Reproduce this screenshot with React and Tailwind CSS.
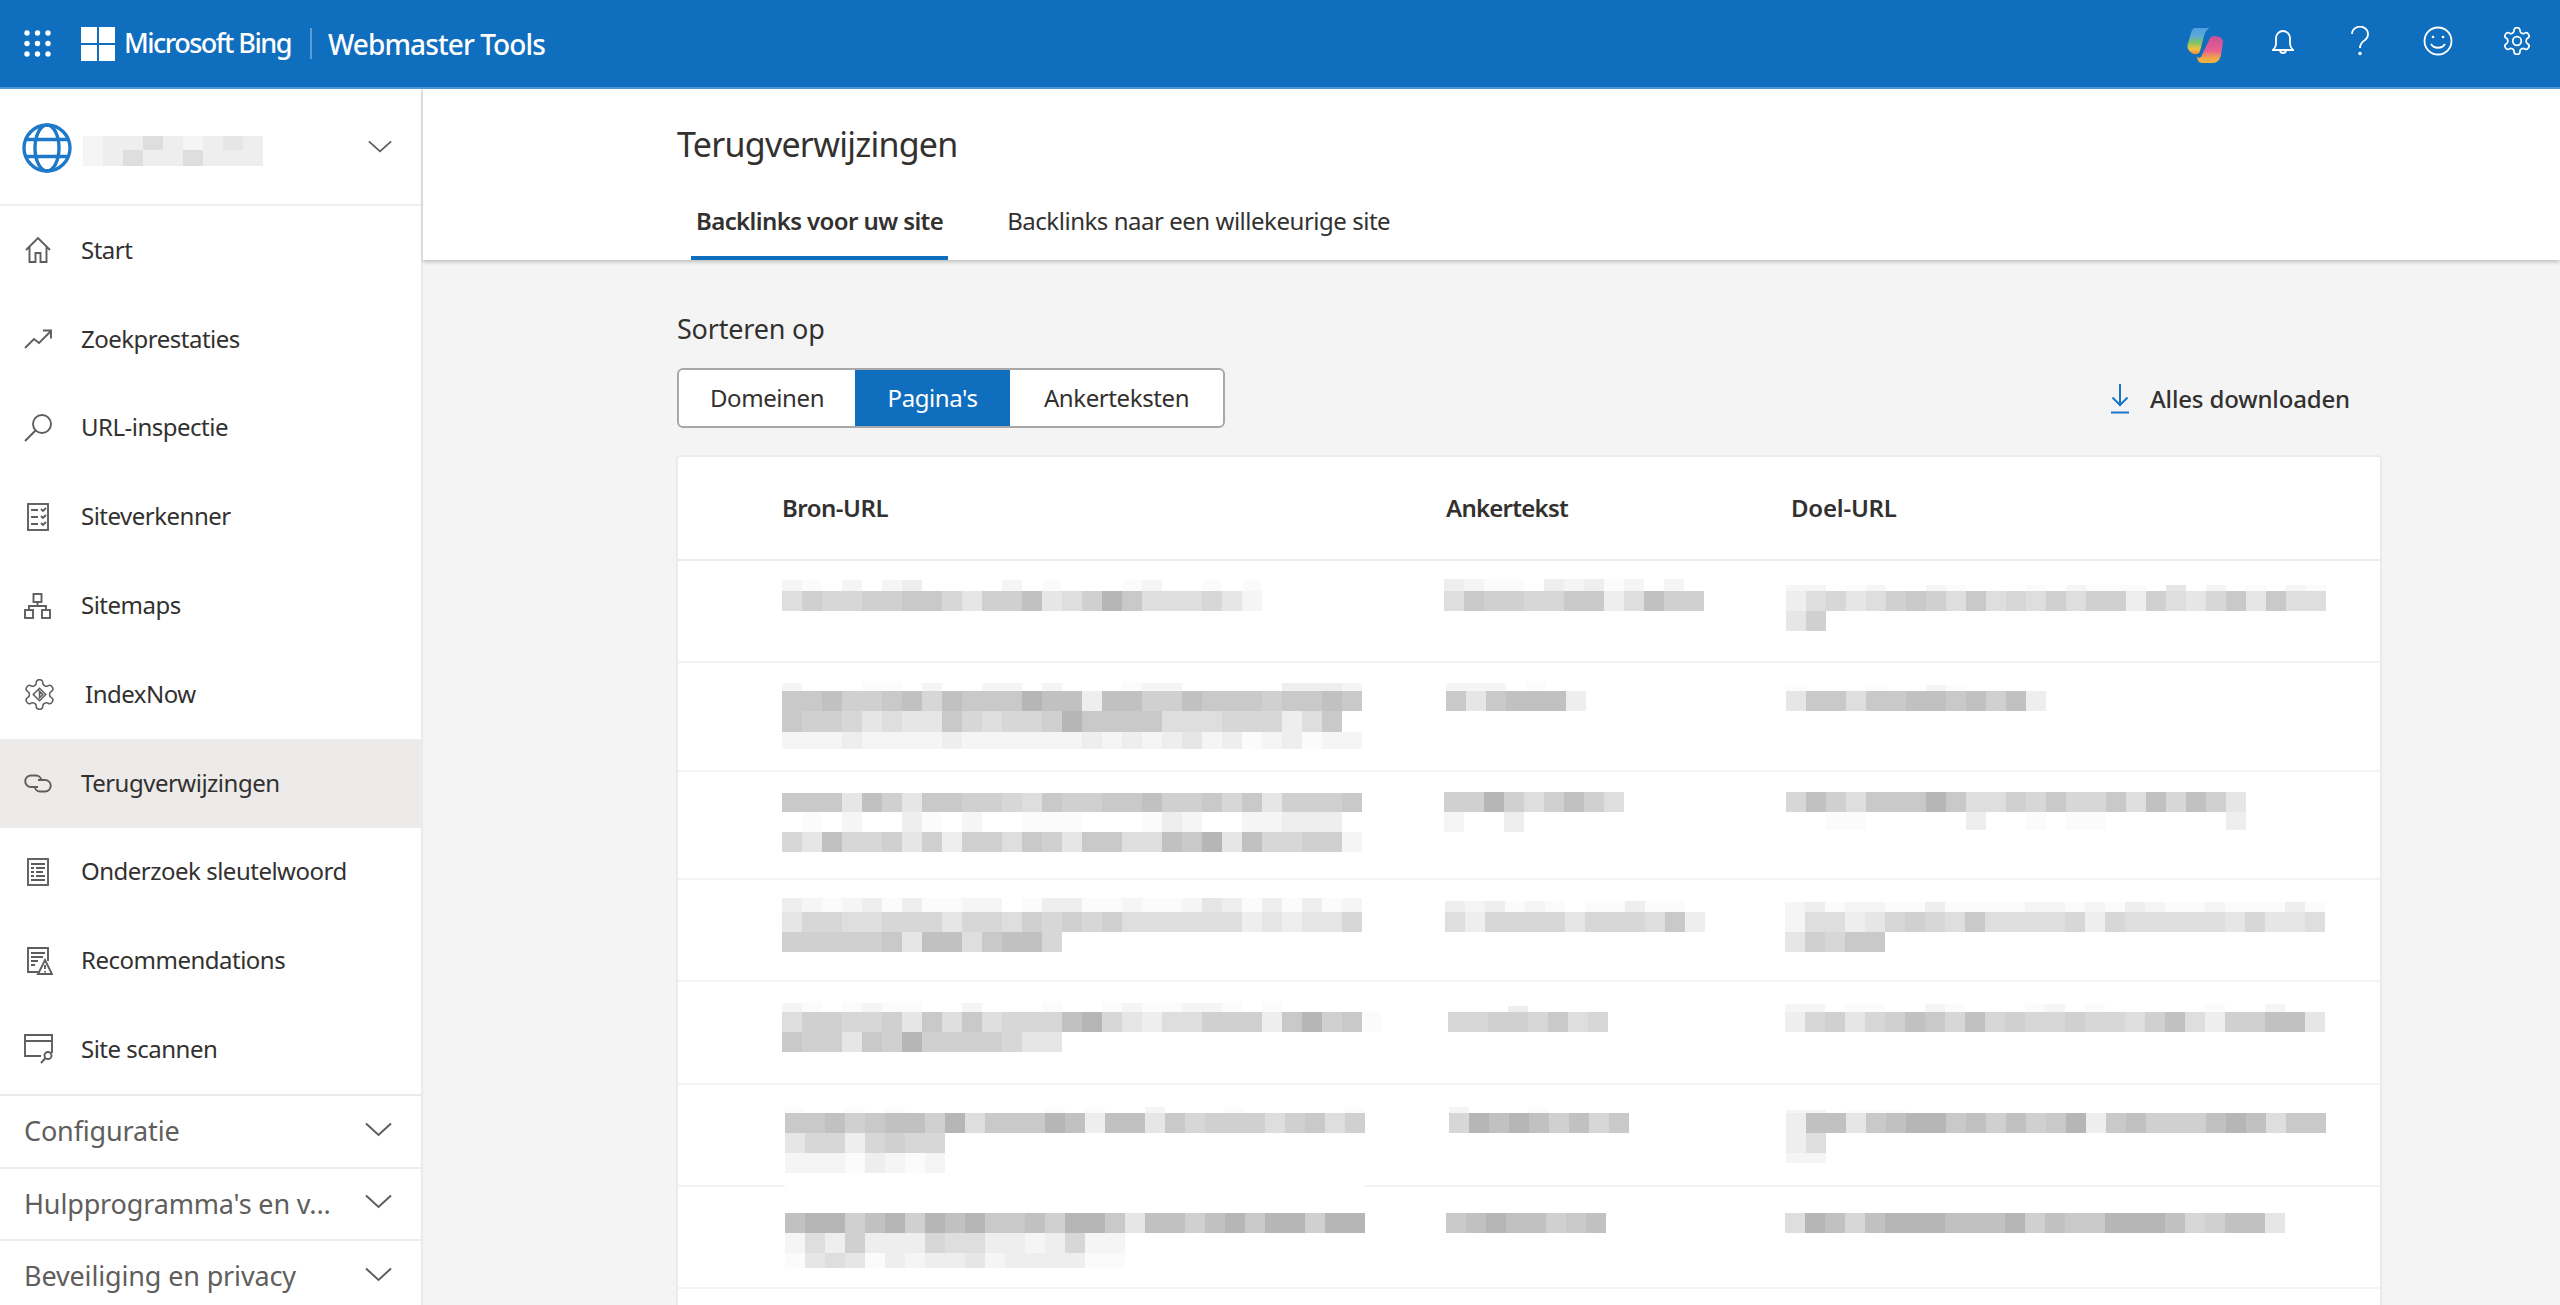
import React from "react";

const GRAY = { 0: "transparent", 1: "#fbfbfb", 2: "#f5f5f5", 3: "#eeeeee", 4: "#e6e6e6", 5: "#dedede", 6: "#d7d7d7", 7: "#d0d0d0", 8: "#c9c9c9", 9: "#c1c1c1", a: "#b6b6b6", w: "#ffffff" };

function Mosaic({ rows, left = 0, top = 0 }) {
  return (
    <div className="relative z-10 flex w-fit flex-col" style={{ marginLeft: left, marginTop: top }}>
      {rows.map(([h, cells], i) => (
        <div key={i} className="flex" style={{ height: h }}>
          {cells.split("").map((c, j) => (
            <div key={j} className="w-5 flex-none" style={{ background: GRAY[c] }} />
          ))}
        </div>
      ))}
    </div>
  );
}

const COL2 = 1444, COL3 = 1784, COL1 = 678;
const W29 = "wwwwwwwwwwwwwwwwwwwwwwwwwwwww";
const ROWS = [
  { h: 102, a: [782, 580, [[11, "210202300002010001200101"], [20, "5766778864779457a8555642"]]], b: [1444, 579, [[12, "3211032312020"], [20, "5877668835977"]]], c: [1786, 585, [[6, "220120021000102111040201021"], [20, "356457875856575773754684855"], [20, "47"]]] },
  { h: 109, a: [782, 683, [[8, "20001102002202000122000003332"], [20, "889778969888a9939977988878898"], [21, "87764544865667a8888555666358"], [17, "22232222322222232323423123122"]]], b: [1446, 683, [[8, "2220100"], [20, "8489993"]]], c: [1786, 685, [[6, "1000100210000"], [20, "4885889989793"]]] },
  { h: 108, a: [782, 793, [[19, "88849748877658778897786847778"], [20, "0102003102001110001320022333"], [20, "649667473775874885598a4966772"]]], b: [1444, 792, [[20, "77a757975"], [20, "2003"]]], c: [1786, 792, [[20, "6975888a855768668596974"], [18, "00110000030010110000003"]]] },
  { h: 102, a: [782, 898, [[14, "32123131122013311211243131312"], [20, "46655666466576767555555343446"], [20, "77777849958996"]]], b: [1445, 901, [[11, "3231210113110"], [20, "5366664666583"]]], c: [1785, 902, [[10, "231221131111221213211211131"], [20, "255346765855556365555546445"], [20, "47688"]]] },
  { h: 103, a: [782, 1003, [[9, "21012110020001001211221010000"], [20, "577667485856669a6435577738a781"], [20, "877487a7777644"]]], b: [1448, 1006, [[6, "0003"], [20, "66776856"]]], c: [1785, 1004, [[8, "220110021000120100000100200"], [20, "367467986967667665795377994"]]] },
  { h: 102, a: [785, 1107, [[6, "10010100000001010020001000001"], [20, "88978997a5888a939948677757857"], [20, "46636766"], [20, "22213212"], [27, W29]]], b: [1449, 1107, [[6, "200010"], [20, "6a9a97968"]]], c: [1786, 1110, [[3, "220111"], [20, "399489aa897978a3897779a9588"], [20, "35"], [10, "22"]]] },
  { h: 102, a: [785, 1213, [[20, "9aa79a7a9a8897aa849979a8aa7aa"], [20, "25373336553323622"], [15, "14541323342333311"]]], b: [1446, 1213, [[20, "89a99789"]]], c: [1785, 1213, [[20, "5a969aaa999a7988aaa967994"]]] },
  { h: 102 },
];

const S = { fill: "none", stroke: "#605e5c", strokeWidth: 1.9 };
const GEAR = "M12.22 2h-.44a2 2 0 0 0-2 2v.18a2 2 0 0 1-1 1.73l-.43.25a2 2 0 0 1-2 0l-.15-.08a2 2 0 0 0-2.73.73l-.22.38a2 2 0 0 0 .73 2.73l.15.1a2 2 0 0 1 1 1.72v.51a2 2 0 0 1-1 1.74l-.15.09a2 2 0 0 0-.73 2.73l.22.38a2 2 0 0 0 2.73.73l.15-.08a2 2 0 0 1 2 0l.43.25a2 2 0 0 1 1 1.73V20a2 2 0 0 0 2 2h.44a2 2 0 0 0 2-2v-.18a2 2 0 0 1 1-1.73l.43-.25a2 2 0 0 1 2 0l.15.08a2 2 0 0 0 2.73-.73l.22-.39a2 2 0 0 0-.73-2.73l-.15-.08a2 2 0 0 1-1-1.74v-.5a2 2 0 0 1 1-1.74l.15-.09a2 2 0 0 0 .73-2.73l-.22-.38a2 2 0 0 0-2.73-.73l-.15.08a2 2 0 0 1-2 0l-.43-.25a2 2 0 0 1-1-1.73V4a2 2 0 0 0-2-2z";

const Icons = {
  home: <svg width="28" height="28" viewBox="0 0 28 28" {...S}><path d="M2 14 14 2 26 14M5.500 11v15h6V17h5v9h6V11" /></svg>,
  trend: <svg width="28" height="20" viewBox="0 0 28 20" {...S}><path d="M1 19 10 10l5 4L27 2M19 1.500h8v8" /></svg>,
  search: <svg width="28" height="28" viewBox="0 0 28 28" {...S}><circle cx="18" cy="10" r="9" /><path d="M11.500 16.500 1 27" /></svg>,
  check: <svg width="22" height="28" viewBox="0 0 22 28" {...S}><rect x="1" y="1" width="20" height="26" /><path d="M4 7h7M4 14h7M4 21h7M14 6l2 2 3-3M14 13l2 2 3-3M14 20l2 2 3-3" /></svg>,
  sitemap: <svg width="27" height="26" viewBox="0 0 27 26" {...S}><rect x="9.500" y="1" width="8" height="8" /><rect x="1" y="17" width="8" height="8" /><rect x="18" y="17" width="8" height="8" /><path d="M13.500 9v4M5 17v-4h17v4" /></svg>,
  gear: <svg width="31" height="31" viewBox="1.500 1.500 21 21" fill="none" stroke="#605e5c" strokeWidth="1.05"><path d={GEAR} /><path d="M12 7.800 16.200 12 12 16.200 7.800 12zM12 9.800v4.400L14.200 12z" /></svg>,
  link: <svg width="28" height="19" viewBox="0 0 28 19" {...S}><path d="M14 13H7A5.700 5.700 0 0 1 7 1.500h5A5.800 5.800 0 0 1 17.500 7" /><path d="M14 6h7a5.700 5.700 0 0 1 0 11.500h-5A5.800 5.800 0 0 1 10.500 12" /></svg>,
  doc: <svg width="22" height="28" viewBox="0 0 22 28" {...S}><rect x="1" y="1" width="20" height="26" /><path d="M4 6h14M4 10h3M9 10h9M4 14h3M9 14h7M4 18h3M9 18h9M4 22h14" /></svg>,
  rec: <svg width="26" height="28" viewBox="0 0 26 28" {...S}><path d="M12 25H1V1h20v13M4 6h14M4 10h12M4 14h7M4 18h4" /><path d="M18 13 25 27H11zM18 18v4M18 24v1.500" /></svg>,
  scan: <svg width="29" height="32" viewBox="0 0 29 32" {...S}><path d="M17 22H1V1h27v18M1 7h27" /><circle cx="24" cy="21.500" r="3.500" /><path d="M21.500 24 17 29" /></svg>,
};

const Chevron = ({ className }) => (
  <svg className={className} width="27" height="15" viewBox="0 0 27 15" fill="none" stroke="#605e5c" strokeWidth="2" preserveAspectRatio="none"><path d="M1 1.500 13.500 13 26 1.500" /></svg>
);

const NAV = [
  ["Start", "home", 24],
  ["Zoekprestaties", "trend", 24],
  ["URL-inspectie", "search", 24],
  ["Siteverkenner", "check", 27],
  ["Sitemaps", "sitemap", 24],
  ["IndexNow", "gear", 24],
  ["Terugverwijzingen", "link", 24],
  ["Onderzoek sleutelwoord", "doc", 27],
  ["Recommendations", "rec", 27],
  ["Site scannen", "scan", 24],
];

function NavIcon({ name, x }) {
  const cls = { 24: "w-[81px] pl-[24px]", 27: "w-[81px] pl-[27px]" }[x];
  return <div className={`flex flex-none items-center ${cls}`}>{Icons[name]}</div>;
}

function Sidebar() {
  return (
    <aside className="flex w-[423px] flex-none flex-col border-r-2 border-[#edebe9] bg-white">
      <div className="flex h-[117px] flex-none items-center border-b-2 border-[#f0f0f0] pl-[22px]">
        <svg className="mt-[3px]" width="50" height="50" viewBox="0 0 50 50" fill="none" stroke="#1f78c8" strokeWidth="3.400">
          <circle cx="25" cy="25" r="23" />
          <ellipse cx="25" cy="25" rx="12" ry="23" />
          <path d="M5 16.500h40M5 33.500h40" />
        </svg>
        <div className="ml-[11px]">
          <Mosaic rows={[[14, "233532343"], [16, "235335333"]]} top={8} />
        </div>
        <Chevron className="ml-[105px] h-[13px] w-[24px]" />
      </div>
      <nav className="flex flex-none flex-col">
        {NAV.map(([label, icon, x]) => (
          <div key={label} className={`flex h-[88.8px] items-center text-[24px] tracking-[-0.5px] text-[#323130] ${label === "Terugverwijzingen" ? "bg-[#edebe9]" : ""}`}>
            <NavIcon name={icon} x={x} />
            <span className={label === "IndexNow" ? "-mt-[1px] ml-[4px]" : "-mt-[1px]"}>{label}</span>
          </div>
        ))}
      </nav>
      {["Configuratie", "Hulpprogramma's en v...", "Beveiliging en privacy"].map((t) => (
        <div key={t} className="flex h-[72.6px] flex-none items-center justify-between border-t-2 border-[#edebe9] pl-[24px] pr-[29px] text-[27px] tracking-[-0.15px] text-[#605e5c]">
          <span>{t}</span>
          <Chevron className="-mt-[4px]" />
        </div>
      ))}
    </aside>
  );
}

function Row({ row, top }) {
  const pick = (d, col) => (d ? <Mosaic rows={d[2]} left={d[0] - col} top={d[1] - top} /> : <div />);
  return (
    <div className="grid flex-none grid-cols-[766px_340px_1fr] border-b-2 border-[#f3f3f3]" style={{ height: row.h }}>
      <div>{pick(row.a, COL1)}</div>
      <div>{pick(row.b, COL2)}</div>
      <div>{pick(row.c, COL3)}</div>
    </div>
  );
}

function Table() {
  let y = 561;
  return (
    <div className="-ml-[1px] mt-[27px] flex w-[1706px] flex-col rounded-t-[4px] border-2 border-[#ebebeb] bg-white">
      <div className="grid h-[104px] flex-none grid-cols-[766px_340px_1fr] items-center border-b-2 border-[#ebebeb] text-[24px] font-semibold tracking-[-0.5px] text-[#323130]">
        <div className="pl-[104px]">Bron-URL</div>
        <div className="pl-[2px] tracking-[-0.75px]">Ankertekst</div>
        <div className="pl-[7px] tracking-[-0.2px]">Doel-URL</div>
      </div>
      {ROWS.map((r, i) => {
        const t = y;
        y += r.h;
        return <Row key={i} row={r} top={t} />;
      })}
    </div>
  );
}

function TopBar() {
  return (
    <header className="flex h-[89px] flex-none items-center border-b-2 border-[#4f97d9] bg-[#106ebe] text-white">
      <svg className="ml-[24px]" width="27" height="27" viewBox="0 0 27 27" fill="#fff">
        {[3, 13.5, 24].map((cx) => [3, 13.5, 24].map((cy) => <circle key={`${cx}-${cy}`} cx={cx} cy={cy} r="2.700" />))}
      </svg>
      <svg className="ml-[30px]" width="34" height="34" viewBox="0 0 34 34" fill="#fff">
        <rect width="16" height="16" /><rect x="18" width="16" height="16" /><rect y="18" width="16" height="16" /><rect x="18" y="18" width="16" height="16" />
      </svg>
      <span className="ml-[9px] text-[27px] font-medium tracking-[-1.5px]">Microsoft Bing</span>
      <span className="ml-[19px] h-[31px] w-[2px] bg-[#5d9dd6]" />
      <span className="ml-[16px] text-[28px] font-medium tracking-[-0.9px]">Webmaster Tools</span>
      <div className="ml-auto flex items-center pr-[29px]">
        <svg className="mt-[3px]" width="36" height="36" viewBox="0 0 36 36">
          <defs>
            <linearGradient id="cpa" x1="0" y1="0" x2="0" y2="1"><stop offset="0" stopColor="#4f9fe0" /><stop offset=".3" stopColor="#5ea9d6" /><stop offset=".55" stopColor="#7cc36a" /><stop offset=".8" stopColor="#f0c240" /><stop offset="1" stopColor="#f08a3c" /></linearGradient>
            <linearGradient id="cpb" x1="0" y1="0" x2="0" y2="1"><stop offset="0" stopColor="#c74f9a" /><stop offset=".55" stopColor="#ea5f8f" /><stop offset=".8" stopColor="#f0a24a" /><stop offset="1" stopColor="#f4b83c" /></linearGradient>
          </defs>
          <path fill="url(#cpa)" d="M8 1h15c-3 1-5 4-6 8l-4 15c-1 4-6 4-8 2-2-1-5-4-4.500-8L4 6c1-3 2-5 4-5z" />
          <path fill="url(#cpb)" d="M27 9c5 0 9 2 9 6l-2 13c-1 5-4 8-8 8H15c-3 0-5-3-5-7 1 3 4 2 5-1l7-15c1-3 3-4 5-4z" />
        </svg>
        <svg className="ml-[49px] -mt-[4px]" width="22" height="26" viewBox="0 0 22 26" fill="none" stroke="#fff" strokeWidth="1.800"><path d="M1 21h20c-2-2-3-3-3-6V9a7 7 0 0 0-14 0v6c0 3-1 4-3 6zM8 21a3 3 0 0 0 6 0" /></svg>
        <svg className="ml-[57px] -mt-[5px]" width="18" height="30" viewBox="0 0 18 30" fill="none" stroke="#fff" strokeWidth="1.800"><path d="M1 8a8 7.500 0 1 1 13 6c-3 2-5 4-5 8" /><circle cx="9" cy="27.500" r=".9" fill="#fff" /></svg>
        <svg className="ml-[54px] -mt-[5px]" width="30" height="30" viewBox="0 0 30 30" fill="none" stroke="#fff" strokeWidth="1.800"><circle cx="15" cy="15" r="13.500" /><path d="M8 18c3 5 11 5 14 0" /><circle cx="10" cy="11" r="1.300" fill="#fff" stroke="none" /><circle cx="20" cy="11" r="1.300" fill="#fff" stroke="none" /></svg>
        <svg className="ml-[50px] -mt-[5px]" width="28" height="28" viewBox="1.500 1.500 21 21" fill="none" stroke="#fff" strokeWidth="1.300"><path d={GEAR} /><circle cx="12" cy="12" r="3.200" /></svg>
      </div>
    </header>
  );
}

export default function App() {
  return (
    <div className="flex h-[1305px] w-[2560px] flex-col overflow-hidden bg-white font-['Noto_Sans',sans-serif]">
      <TopBar />
      <div className="flex min-h-0 flex-1">
        <Sidebar />
        <main className="min-w-0 flex-1 bg-[#f4f4f4]">
          <div className="relative h-[171px] bg-white pl-[254px] pt-[33px] shadow-[0_2px_4px_rgba(0,0,0,0.22)]">
            <h1 className="text-[34px] leading-[44px] tracking-[-0.75px] text-[#323130]">Terugverwijzingen</h1>
            <div className="ml-[14px] mt-[16px] flex gap-[54px] text-[24px] tracking-[-0.47px] text-[#323130]">
              <div className="flex h-[78px] items-center border-b-4 border-[#106ebe] px-[5px] pt-[4px] font-semibold tracking-[-0.6px]">Backlinks voor uw site</div>
              <div className="flex h-[78px] items-center px-[5px]">Backlinks naar een willekeurige site</div>
            </div>
          </div>
          <section className="ml-[254px] w-[1703px] pt-[52px]">
            <div className="text-[27px] leading-[34px] tracking-[-0.2px] text-[#323130]">Sorteren op</div>
            <div className="mt-[22px] flex items-center justify-between pr-[30px]">
              <div className="flex h-[60px] w-[548px] overflow-hidden rounded-[6px] border-2 border-[#a8a8a8] bg-white text-[24px] tracking-[-0.4px] text-[#323130]">
                <div className="flex w-[176px] items-center justify-center">Domeinen</div>
                <div className="flex w-[155px] items-center justify-center bg-[#106ebe] text-white">Pagina's</div>
                <div className="flex flex-1 items-center justify-center">Ankerteksten</div>
              </div>
              <div className="mt-[2px] flex items-center gap-[21px] text-[24px] font-medium tracking-[-0.15px] text-[#323130]">
                <svg width="18" height="30" viewBox="0 0 18 30" fill="none" stroke="#1a75c8" strokeWidth="2"><path d="M9 0v22M1.500 13.500 9 21l7.500-7.500M0 28.500h18" /></svg>
                <span>Alles downloaden</span>
              </div>
            </div>
            <Table />
          </section>
        </main>
      </div>
    </div>
  );
}
